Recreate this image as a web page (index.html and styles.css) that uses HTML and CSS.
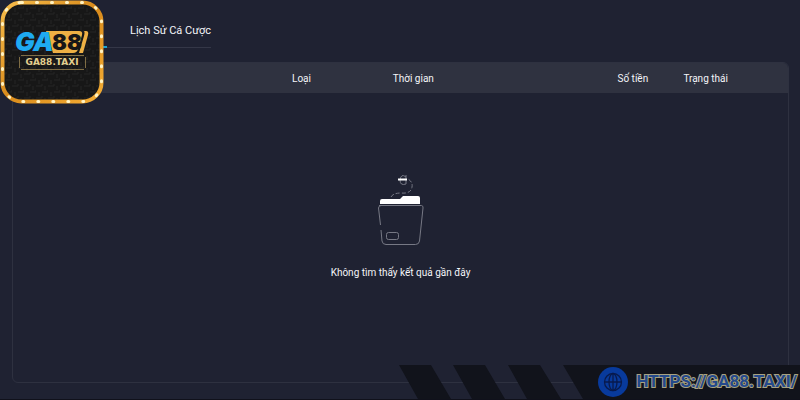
FILE: index.html
```html
<!DOCTYPE html>
<html lang="vi">
<head>
    <meta charset="UTF-8">
    <meta name="viewport" content="width=device-width, initial-scale=1.0">
    <title>Lịch Sử Cá Cược</title>
    <link rel="stylesheet" href="styles.css">
</head>
<body>
    <nav class="tabs">
        <button class="tab active" type="button"></button>
        <button class="tab" type="button">Lịch Sử Cá Cược</button>
    </nav>

    <main class="panel">
        <table class="history">
            <colgroup>
                <col class="col-id">
                <col class="col-type">
                <col class="col-time">
                <col class="col-amount">
                <col>
            </colgroup>
            <thead>
                <tr>
                    <th></th>
                    <th>Loại</th>
                    <th>Thời gian</th>
                    <th>Số tiền</th>
                    <th>Trạng thái</th>
                </tr>
            </thead>
        </table>
        <div class="empty">
            <svg class="empty-icon" width="48" height="72" viewBox="0 0 48 72" fill="none">
                <g stroke="#777985">
                    <path d="M2 31.5H44.500Q46.500 32 46 34L42.500 67Q42 70.500 38.500 70.500H9Q5.500 70.500 5 67L4 56M3.500 51L1.500 34Q1.500 32 4 31.500"/>
                    <rect x="9.500" y="58.500" width="12" height="7" rx="2"/>
                    <path d="M14 23Q16 19 24 19Q34 20 35 13Q36 8 31 5" stroke-dasharray="4 2"/>
                    <path d="M29 3Q24 -1 23 6Q23 12 29 10V1"/>
                </g>
                <path d="M3 30V27Q3 25 5 25H23L26 22H41Q43 22 43 24V30Z" fill="#fff"/>
                <path d="M21 5.500H30" stroke="#fff" stroke-width="2"/>
            </svg>
            <p>Không tìm thấy kết quả gần đây</p>
        </div>
    </main>

    <footer class="banner">
        <svg class="stripes" width="192" height="34" viewBox="0 0 192 34">
            <path d="M0 0H32L52 34H19ZM54 0H86L106 34H73ZM109 0H141L162 34H128ZM164 0H192V34H184Z"/>
        </svg>
        <a class="site" href="#">
            <svg class="globe" width="30" height="30" viewBox="0 0 30 30" fill="none">
                <circle cx="15" cy="15" r="15" fill="#083a9c"/>
                <g stroke="#081a4d" stroke-width="1.300">
                    <circle cx="15" cy="15" r="8.500"/>
                    <ellipse cx="15" cy="15" rx="4" ry="8.500"/>
                    <path d="M15 6.500V23.500M6.500 15H23.500"/>
                </g>
            </svg>
            <span>HTTPS://GA88.TAXI/</span>
        </a>
    </footer>

    <svg class="logo" width="104" height="104" viewBox="0 0 104 104">
        <defs>
            <pattern id="weave" width="12" height="12" patternUnits="userSpaceOnUse">
                <rect width="12" height="12" fill="#171717"/>
                <path d="M0 2H6V0M6 8H12V6M3 12V8M9 6V2" stroke="#242424" fill="none"/>
            </pattern>
            <linearGradient id="gold" x2="1" y2="1">
                <stop offset="0" stop-color="#f6bc4b"/>
                <stop offset="0.500" stop-color="#d98b1b"/>
                <stop offset="1" stop-color="#f4ad35"/>
            </linearGradient>
        </defs>
        <rect x="2.500" y="2.500" width="99" height="99" rx="19" fill="url(#weave)" stroke="url(#gold)" stroke-width="4"/>
        <rect x="2.500" y="2.500" width="99" height="99" rx="19" fill="none" stroke="#fff3c4" stroke-width="3" stroke-linecap="round" stroke-dasharray="1 14"/>
        <path d="M46 31H79Q83 31 82 35L78 49Q77 53 73 53H53Z" fill="#eeb044"/>
        <path d="M84 31H86Q89 31 88 35L83 53H79L84 36Q85 32 84 31Z" fill="#eeb044"/>
        <text class="logo-88" x="52" y="50">88</text>
        <text class="logo-ga" x="15 33" y="51">GA</text>
        <path d="M21 55.500H84M21 69.500H84M19.500 57V68M85.500 57V68" stroke="#9b8450" stroke-width="0.800"/>
        <text class="logo-site" x="52" y="65">GA88.TAXI</text>
    </svg>
</body>
</html>
```
FILE: styles.css
```css
* {
    box-sizing: border-box;
}

body {
    position: relative;
    min-height: 100vh;
    margin: 0;
    padding: 16px 11px 16px 12px;
    display: flex;
    flex-direction: column;
    background-color: #1f2232;
    border-bottom: 1px solid #10111b;
    color: #f4f5f9;
    font-family: Roboto, "Noto Sans", sans-serif;
    font-size: 10px;
}

.tabs {
    display: flex;
    align-self: flex-start;
    height: 32px;
    margin-bottom: 14px;
    border-bottom: 1px solid #343747;
}

.tab {
    margin: 0 0 -1px;
    padding: 0 0 2px 23px;
    border: 0;
    border-bottom: 2px solid transparent;
    background: none;
    color: #f4f5f9;
    font: inherit;
    font-size: 11px;
    cursor: pointer;
}

.tab.active {
    width: 95px;
    border-color: #16a6d8;
}

.panel {
    flex: 1;
    display: flex;
    flex-direction: column;
    border: 1px solid #2e3140;
    border-radius: 6px;
    overflow: hidden;
}

.history {
    width: 100%;
    table-layout: fixed;
    border-collapse: collapse;
    background-color: #2f3240;
}

.history th {
    height: 30px;
    padding: 0;
    text-align: left;
    font-weight: 400;
}

.col-id {
    width: 36%;
}

.col-type {
    width: 13%;
}

.col-time {
    width: 29%;
}

.col-amount {
    width: 8.5%;
}

.empty {
    flex: 1;
    display: flex;
    flex-direction: column;
    align-items: center;
    padding-top: 81px;
}

.empty p {
    margin: 19px 0 0;
    line-height: 16px;
}

.banner {
    position: absolute;
    right: 0;
    bottom: 0;
    display: flex;
    height: 34px;
}

.stripes {
    fill: #11131b;
}

.site {
    display: flex;
    align-items: center;
    gap: 9px;
    padding: 0 3px 0 7px;
    background-color: #11131b;
    color: #24498c;
    font-family: Roboto, sans-serif;
    font-size: 17px;
    font-weight: 700;
    text-decoration: none;
}

.site span {
    padding-bottom: 2px;
    -webkit-text-stroke: 2px #a8a281;
    paint-order: stroke fill;
}

.logo {
    position: absolute;
    top: 0;
    left: 0;
}

.logo-ga,
.logo-88 {
    font-family: Inter, sans-serif;
    font-weight: 900;
}

.logo-ga {
    fill: #1eaaf1;
    font-size: 26px;
    font-style: italic;
}

.logo-88 {
    fill: #171717;
    font-size: 22px;
}

.logo-site {
    fill: #e3cf8e;
    font-family: "DejaVu Sans", sans-serif;
    font-size: 9px;
    font-weight: 700;
    text-anchor: middle;
}
```
